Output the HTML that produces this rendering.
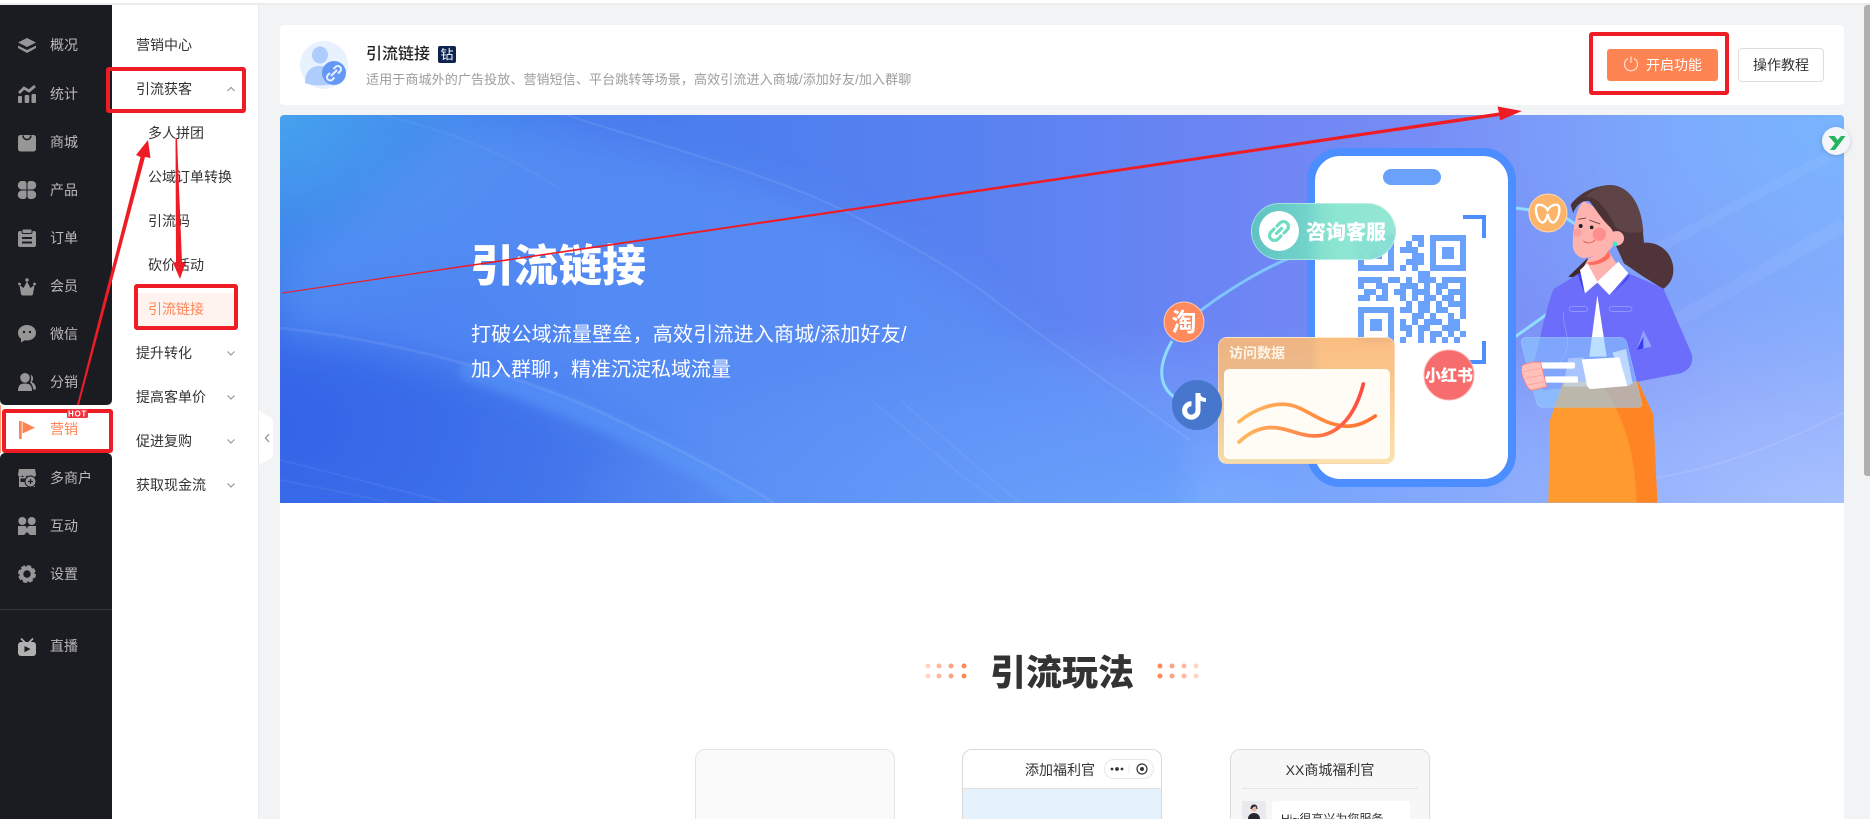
<!DOCTYPE html>
<html lang="zh-CN"><head><meta charset="utf-8"><title>引流链接</title>
<style>
html,body{margin:0;padding:0;width:1870px;height:819px;overflow:hidden;background:#f2f3f5;font-family:"Liberation Sans","Noto Sans CJK SC",sans-serif}
div,svg{position:absolute}
svg{overflow:visible}
#root{left:0;top:0;width:1870px;height:819px;overflow:hidden;background:#f2f3f5}
.t{position:absolute;white-space:nowrap;line-height:20px}
.m{left:50px;font-size:14px;color:#b9b9b9}
.s{font-size:14px;color:#333}
.i{left:18px;width:18px;height:18px;fill:#969696}
</style></head><body><div id="root">
<div style="left:0;top:0;width:1870px;height:3px;background:#fff"></div>
<div style="left:0;top:3px;width:1870px;height:2px;background:#ececec"></div>

<!-- scrollbar -->
<div style="left:1864px;top:5px;width:6px;height:471px;background:#b0b0b0;border-radius:3px 0 0 3px"></div>

<!-- dark sidebar -->
<div style="left:0;top:5px;width:112px;height:400px;background:#1b1c21;border-radius:0 0 5px 5px"></div>
<div style="left:0;top:405px;width:112px;height:48px;background:#fff"></div>
<div style="left:0;top:405px;width:1px;height:48px;background:#ff9a75"></div>
<div style="left:0;top:453px;width:112px;height:366px;background:#1b1c21;border-radius:5px 5px 0 0"></div>
<div style="left:0;top:609px;width:112px;height:1px;background:#36373b"></div>

<svg class="i" style="top:37px" viewBox="0 0 18 18"><path d="M9 1 18 5.500 9 10 0 5.500Z"/><path d="M0 8.600 9 13 18 8.600V11L9 16 0 11Z"/></svg>
<svg class="i" style="top:85px" viewBox="0 0 18 18"><rect x="0" y="11" width="4" height="7" rx="1"/><rect x="6.700" y="10" width="4.500" height="8" rx="1"/><rect x="13.500" y="9" width="4.500" height="9" rx="1"/><path d="M1 8 6 3l5 3 6-5" fill="none" stroke="#969696" stroke-width="2.800"/></svg>
<svg class="i" style="top:134px" viewBox="0 0 18 18"><rect x="0" y="1" width="18" height="16.500" rx="2.500"/><path d="M5 1.500C5.500 7 12.500 7 13 1.500" fill="none" stroke="#1b1c21" stroke-width="1.600"/></svg>
<svg class="i" style="top:181px" viewBox="0 0 18 18"><path d="M4 0h2a2.500 2.500 0 0 1 2.500 2.500V8.500H4A4 4 0 0 1 4 0Z"/><path d="M14 0h-2a2.500 2.500 0 0 0-2.500 2.500V8.500H14A4 4 0 0 0 14 0Z"/><path d="M4 18h2a2.500 2.500 0 0 0 2.500-2.500V9.500H4A4 4 0 0 0 4 18Z"/><path d="M14 18h-2a2.500 2.500 0 0 1-2.500-2.500V9.500H14A4 4 0 0 1 14 18Z"/></svg>
<svg class="i" style="top:229px" viewBox="0 0 18 18"><rect x="0" y="2" width="18" height="16" rx="2"/><rect x="4" y="0" width="10" height="4.500" rx="1.500" stroke="#1b1c21"/><rect x="4" y="8" width="10" height="2" fill="#1b1c21"/><rect x="4" y="12.500" width="10" height="2" fill="#1b1c21"/></svg>
<svg class="i" style="top:278px" viewBox="0 0 18 18"><circle cx="9" cy="2" r="1.700"/><circle cx="1.500" cy="6" r="1.400"/><circle cx="16.500" cy="6" r="1.400"/><path d="M1.500 7 5.500 10 9 3.500 12.500 10 16.500 7 15 16a2 2 0 0 1-2 1.500H5A2 2 0 0 1 3 16Z"/></svg>
<svg class="i" style="top:325px" viewBox="0 0 18 18"><path d="M9 0c5 0 9 3.300 9 7.800S14 15.500 9 15.500c-.8 0-1.500 0-2.300-.2L3 17.500v-3.700C1 12.400 0 10.300 0 7.800 0 3.300 4 0 9 0Z"/><circle cx="6" cy="7" r="1.200" fill="#1b1c21"/><circle cx="12" cy="7" r="1.200" fill="#1b1c21"/></svg>
<svg class="i" style="top:373px" viewBox="0 0 18 18"><circle cx="7" cy="4.800" r="4.800"/><path d="M0 18C0 12 2.500 10.500 7 10.500S14 12 14 18Z"/><path d="M12.500 1.500a4.500 4.500 0 0 1 1 7.500c2.800 1 4.500 3.500 4.500 7.500H15.300c-.3-3-1.300-5.500-3.300-7 1.300-1.500 1.500-5.500.5-8Z"/></svg>
<svg style="left:18px;top:421px;width:18px;height:18px" viewBox="0 0 18 18"><rect x="1" y="0" width="2.700" height="18" fill="#ff8454"/><path d="M4.500 .5 17 6.800 4.500 12.500Z" fill="#ff8454"/></svg>
<svg class="i" style="top:469px" viewBox="0 0 18 18"><path d="M1 0h16l1 5.500a2.200 2.200 0 0 1-4.500.3 2.200 2.200 0 0 1-4.500 0 2.200 2.200 0 0 1-4.500 0A2.200 2.200 0 0 1 0 5.500Z"/><path d="M1 8h16v10H1Z"/><rect x="2.500" y="9.500" width="5" height="3.500" fill="#1b1c21"/><circle cx="12.500" cy="12.500" r="5.500" stroke="#1b1c21"/><path d="M10 12.500h5M12.500 10v5" stroke="#1b1c21" stroke-width="1.200"/></svg>
<svg class="i" style="top:517px" viewBox="0 0 18 18"><circle cx="4.300" cy="4" r="4"/><circle cx="13.700" cy="4" r="4"/><path d="M0 9h6.500c1.500 0 2 1 2.500 3 .5-2 1-3 2.500-3H18v9h-6l-3-3-3 3H0Z"/></svg>
<svg class="i" style="top:565px" viewBox="0 0 18 18"><circle cx="9" cy="9" r="5.700" fill="none" stroke="#969696" stroke-width="4"/><circle cx="9" cy="9" r="8" fill="none" stroke="#969696" stroke-width="2" stroke-dasharray="4 2.280"/></svg>
<svg class="i" style="top:638px;fill:#b0b0b0" viewBox="0 0 18 18"><rect x="0" y="4" width="18" height="14" rx="3"/><path d="M3 .5 7 4.500M15 .5 11 4.500" stroke="#b0b0b0" stroke-width="1.800"/><path d="M6.500 8 12.500 11 6.500 14.200Z" fill="#1b1c21"/></svg>

<span class="t m" style="top:35px">概况</span><span class="t m" style="top:84px">统计</span><span class="t m" style="top:132px">商城</span><span class="t m" style="top:180px">产品</span><span class="t m" style="top:228px">订单</span><span class="t m" style="top:276px">会员</span><span class="t m" style="top:324px">微信</span><span class="t m" style="top:372px">分销</span>
<span class="t m" style="top:419px;color:#ff8454">营销</span>
<span class="t m" style="top:468px">多商户</span><span class="t m" style="top:516px">互动</span><span class="t m" style="top:564px">设置</span><span class="t m" style="top:636px">直播</span>

<!-- sub menu -->
<div style="left:112px;top:5px;width:147px;height:814px;background:#fff;border-right:1px solid #ececee;box-sizing:border-box"></div>
<div style="left:138px;top:293px;width:97px;height:33px;background:#fff3ef"></div>
<span class="t s" style="left:136px;top:35px">营销中心</span>
<span class="t s" style="left:136px;top:79px">引流获客</span>
<span class="t s" style="left:148px;top:123px">多人拼团</span>
<span class="t s" style="left:148px;top:167px">公域订单转换</span>
<span class="t s" style="left:148px;top:211px">引流码</span>
<span class="t s" style="left:148px;top:255px">砍价活动</span>
<span class="t s" style="left:148px;top:299px;color:#ff8454">引流链接</span>
<span class="t s" style="left:136px;top:343px">提升转化</span>
<span class="t s" style="left:136px;top:387px">提高客单价</span>
<span class="t s" style="left:136px;top:431px">促进复购</span>
<span class="t s" style="left:136px;top:475px">获取现金流</span>
<svg style="left:0;top:0;width:1870px;height:819px" viewBox="0 0 1870 819"><g fill="none" stroke="#9a9a9a" stroke-width="1.200"><path d="M227.500 91 231 87.500 234.500 91"/><path d="M227.500 351.500 231 355 234.500 351.500"/><path d="M227.500 395.500 231 399 234.500 395.500"/><path d="M227.500 439.500 231 443 234.500 439.500"/><path d="M227.500 483.500 231 487 234.500 483.500"/></g>
<path d="M259 411 273 419V457L259 465Z" fill="#fff"/><path d="M269 434 265.500 438 269 442" fill="none" stroke="#8a8f99" stroke-width="1.300"/></svg>

<!-- header card -->
<div style="left:280px;top:25px;width:1564px;height:80px;background:#fff;border-radius:4px"></div>
<svg style="left:300px;top:41px;width:48px;height:48px" viewBox="0 0 48 48"><circle cx="24" cy="24" r="24" fill="#e8f2ff"/><ellipse cx="20" cy="14" rx="8" ry="8.500" fill="#aecdfc"/><path d="M5 42C5 30 11 25 20 25c6 0 10 2 13 6v12C24 45 12 45 5 42Z" fill="#aecdfc"/><circle cx="34" cy="32" r="12" fill="#6598f5"/><path d="M31 35 37 29" stroke="#e8f0ff" stroke-width="2" fill="none"/><path d="M30 32 27.700 34.300a3.200 3.200 0 0 0 4.500 4.500L34.500 36.500M33.500 28l2.300-2.300a3.200 3.200 0 0 1 4.500 4.500L38 32.500" stroke="#e8f0ff" stroke-width="2" fill="none"/></svg>
<span class="t" style="left:366px;top:45px;font-size:16px;font-weight:500;color:#222">引流链接</span>
<div style="left:438px;top:46px;width:18px;height:17px;background:#0e2350;border-radius:2px;color:#fff;font-size:13px;line-height:17px;text-align:center">钻</div>
<span class="t" style="left:366px;top:70px;font-size:13px;letter-spacing:.12px;color:#9c9c9c">适用于商城外的广告投放、营销短信、平台跳转等场景，高效引流进入商城/添加好友/加入群聊</span>

<div style="left:1607px;top:49px;width:111px;height:32px;background:#ff8454;border-radius:3px"></div>
<svg style="left:1623px;top:56px;width:16px;height:16px" viewBox="0 0 16 16"><path d="M5 2.500a6.500 6.500 0 1 0 6 0" fill="none" stroke="#ffe4d8" stroke-width="1.100"/><path d="M8 .5V7" stroke="#ffe4d8" stroke-width="1.100"/></svg>
<span class="t" style="left:1646px;top:55px;font-size:14px;color:#fff">开启功能</span>
<div style="left:1738px;top:48px;width:86px;height:34px;box-sizing:border-box;border:1px solid #dedede;border-radius:4px;background:#fff;font-size:14px;line-height:32px;text-align:center;color:#333">操作教程</div>

<!-- white content -->
<div style="left:280px;top:503px;width:1564px;height:316px;background:#fff"></div>

<!-- banner -->
<div style="left:280px;top:115px;width:1564px;height:388px;border-radius:4px 4px 0 0;overflow:hidden;background:
radial-gradient(300px 230px at 0 0,#46a2ee 0,rgba(70,162,238,0) 100%),
radial-gradient(420px 300px at 100% 0,#78b4ff 0,rgba(120,180,255,0) 100%),
radial-gradient(560px 220px at 100% 100%,#a6c0ff 0,rgba(166,192,255,0) 100%),
radial-gradient(620px 180px at 58% 100%,#78acff 0,rgba(120,172,255,0) 100%),
radial-gradient(360px 240px at 0 80%,#3464e8 0,rgba(52,100,232,0) 100%),
linear-gradient(90deg,#3d74ea 0,#4c7eee 28%,#5a82f1 46%,#6e85f4 62%,#7d93f7 82%,#8aa6fb 100%)"></div>

<svg style="left:0;top:0;width:1870px;height:819px" viewBox="0 0 1870 819">
<defs>
<clipPath id="bc"><rect x="280" y="115" width="1564" height="388"/></clipPath>
<filter id="b18" x="-20%" y="-20%" width="140%" height="140%"><feGaussianBlur stdDeviation="18"/></filter>
<filter id="b4" x="-20%" y="-40%" width="140%" height="180%"><feGaussianBlur stdDeviation="4"/></filter>
</defs>
<g clip-path="url(#bc)">
<path d="M567 130C640 150 760 180 843 220 900 250 950 275 998 313 1060 360 1120 400 1190 425V520H774C700 460 640 425 596 420 520 380 400 350 280 338V260C350 220 420 170 440 130Z" fill="#5c96f8" fill-opacity=".55" filter="url(#b18)"/>
<path d="M470 372C540 395 620 425 700 470 735 490 760 510 780 525" fill="none" stroke="#5c9cfa" stroke-opacity=".45" stroke-width="20" stroke-linecap="round" filter="url(#b4)"/>
<g fill="none" stroke="#fff">
<path d="M567 115C640 140 760 170 843 210 900 240 950 265 998 303 1060 350 1120 390 1190 440" stroke-opacity=".09" stroke-width="2"/>
<path d="M280 328C360 336 480 360 596 410 670 445 730 475 774 503" stroke-opacity=".08" stroke-width="3"/>
<path d="M380 115C450 130 520 160 560 190" stroke-opacity=".05" stroke-width="2"/>
<path d="M280 460C340 475 400 490 450 503M280 480C320 488 360 495 390 503" stroke-opacity=".06" stroke-width="2"/>
<path d="M870 400C910 430 950 470 1000 503M900 400C940 435 980 470 1020 503" stroke-opacity=".05" stroke-width="2"/>
<path d="M1640 480C1720 470 1790 440 1844 412" stroke-opacity=".12" stroke-width="1.500"/>
<path d="M1560 300C1640 260 1760 190 1844 150" stroke-opacity=".05" stroke-width="10"/>
<path d="M1590 370C1680 320 1780 260 1844 225" stroke-opacity=".05" stroke-width="14"/>
</g>
</g>
<!-- connecting lines -->
<g fill="none" stroke="#8fdcff" stroke-width="3">
<path d="M1200 311C1225 292 1260 270 1290 258" stroke="#7fc4ff"/>
<path d="M1172 341C1158 365 1158 385 1174 397"/>
<path d="M1396 388C1420 382 1460 368 1482 360 1510 340 1540 320 1548 313"/>
<path d="M1516 208 1530 210"/>
<path d="M1566 218 1578 226"/>
</g>
<!-- phone -->
<rect x="1311" y="152" width="201" height="331" rx="29" fill="#fff" stroke="#4c8dff" stroke-width="8"/>
<rect x="1383" y="169" width="58" height="16" rx="8" fill="#6aa1fb"/>
<g transform="translate(1358 235) scale(6)" fill="#6aa1fb"><path d="M0 0h6v1h-6zM9 0h2v1h-2zM12 0h6v1h-6zM0 1h1v1h-1zM5 1h1v1h-1zM8 1h1v1h-1zM10 1h1v1h-1zM12 1h1v1h-1zM17 1h1v1h-1zM0 2h1v1h-1zM2 2h2v1h-2zM5 2h1v1h-1zM7 2h3v1h-3zM12 2h1v1h-1zM14 2h2v1h-2zM17 2h1v1h-1zM0 3h1v1h-1zM2 3h2v1h-2zM5 3h1v1h-1zM9 3h2v1h-2zM12 3h1v1h-1zM14 3h2v1h-2zM17 3h1v1h-1zM0 4h1v1h-1zM5 4h1v1h-1zM8 4h3v1h-3zM12 4h1v1h-1zM17 4h1v1h-1zM0 5h6v1h-6zM7 5h1v1h-1zM9 5h1v1h-1zM12 5h6v1h-6zM10 6h2v1h-2zM0 7h4v1h-4zM5 7h2v1h-2zM8 7h1v1h-1zM10 7h3v1h-3zM14 7h4v1h-4zM0 8h1v1h-1zM3 8h2v1h-2zM7 8h3v1h-3zM11 8h1v1h-1zM13 8h2v1h-2zM17 8h1v1h-1zM1 9h2v1h-2zM4 9h1v1h-1zM6 9h2v1h-2zM9 9h3v1h-3zM13 9h1v1h-1zM15 9h3v1h-3zM0 10h2v1h-2zM3 10h2v1h-2zM7 10h1v1h-1zM9 10h1v1h-1zM11 10h2v1h-2zM14 10h2v1h-2zM17 10h1v1h-1zM8 11h1v1h-1zM10 11h2v1h-2zM13 11h1v1h-1zM15 11h3v1h-3zM0 12h6v1h-6zM7 12h2v1h-2zM10 12h2v1h-2zM13 12h2v1h-2zM17 12h1v1h-1zM0 13h1v1h-1zM5 13h1v1h-1zM9 13h2v1h-2zM12 13h1v1h-1zM15 13h1v1h-1zM17 13h1v1h-1zM0 14h1v1h-1zM2 14h2v1h-2zM5 14h1v1h-1zM7 14h1v1h-1zM9 14h1v1h-1zM11 14h3v1h-3zM15 14h2v1h-2zM0 15h1v1h-1zM2 15h2v1h-2zM5 15h1v1h-1zM7 15h2v1h-2zM10 15h2v1h-2zM14 15h3v1h-3zM0 16h1v1h-1zM5 16h1v1h-1zM8 16h1v1h-1zM10 16h1v1h-1zM12 16h2v1h-2zM15 16h1v1h-1zM17 16h1v1h-1zM0 17h6v1h-6zM7 17h1v1h-1zM10 17h1v1h-1zM12 17h1v1h-1zM14 17h1v1h-1zM16 17h1v1h-1z"/></g>
<path d="M1463 217H1484V238M1484 341V362H1463" fill="none" stroke="#4c8dff" stroke-width="4"/>
</svg>

<!-- pill -->
<div style="left:1251px;top:203px;width:145px;height:57px;box-sizing:border-box;border:1px solid rgba(255,255,255,.4);border-radius:29px;background:linear-gradient(90deg,rgba(92,198,190,.95),rgba(130,228,205,.92) 60%,rgba(130,225,205,.85));backdrop-filter:blur(5px)"></div>
<div style="left:1259px;top:211px;width:40px;height:40px;border-radius:50%;background:#fff"></div>
<svg style="left:1267px;top:219px;width:24px;height:24px" viewBox="0 0 24 24"><g fill="none" stroke="#6fdcc2" stroke-width="3.200" stroke-linecap="round"><path d="M9.500 14.500 14.500 9.500"/><path d="M10 7 13 4a4.800 4.800 0 0 1 7 7l-3 3"/><path d="M14 17l-3 3a4.800 4.800 0 0 1-7-7l3-3"/></g></svg>
<span class="t" style="left:1306px;top:223px;font-size:20px;font-weight:900;color:#fff">咨询客服</span>

<!-- data card -->
<div style="left:1218px;top:337px;width:177px;height:127px;box-sizing:border-box;border:1px solid rgba(255,255,255,.35);border-radius:9px;background:linear-gradient(180deg,rgba(250,184,120,.92) 0,rgba(250,190,125,.9) 30%,rgba(250,225,170,.95) 100%);backdrop-filter:blur(4px)"></div>
<span class="t" style="left:1229px;top:343px;font-size:14px;font-weight:700;color:#fff5e8">访问数据</span>
<div style="left:1224px;top:369px;width:166px;height:90px;border-radius:5px;background:#fffbf5"></div>

<svg style="left:0;top:0;width:1870px;height:819px" viewBox="0 0 1870 819">
<defs>
<linearGradient id="g1" x1="0" y1="0" x2="1" y2="0"><stop offset="0" stop-color="#ffb95e"/><stop offset="1" stop-color="#ff6f2d"/></linearGradient>
<linearGradient id="g2" x1="0" y1="0" x2="1" y2="0"><stop offset="0" stop-color="#ffb85e"/><stop offset=".6" stop-color="#ff7f47"/><stop offset="1" stop-color="#fe4a3f"/></linearGradient>
<filter id="ys" x="-40%" y="-40%" width="180%" height="180%"><feDropShadow dx="0" dy="1" stdDeviation="2" flood-color="#000" flood-opacity=".18"/></filter>
</defs>
<g transform="translate(1140 130) scale(.33333)" fill="none" stroke-width="11" stroke-linecap="round">
<path d="M297 875C340 840 400 815 450 825 500 835 540 880 610 888 650 892 680 875 706 858" stroke="url(#g1)"/>
<path d="M297 936C330 905 370 885 420 895 470 905 500 925 550 915 610 900 650 840 670 762" stroke="url(#g2)"/>
</g>
<!-- logos -->
<circle cx="1184" cy="322" r="20" fill="#ff8a5e" stroke="#ffc7ae" stroke-width="1"/>
<circle cx="1197" cy="405" r="25" fill="#4777cc"/>
<g transform="translate(1184 390)"><path d="M14 3v17.500a6.700 6.700 0 1 1-6.500-6.700" fill="none" stroke="#fff" stroke-width="5"/><path d="M14 4c1 4 4 6 8 6" fill="none" stroke="#fff" stroke-width="4"/></g>
<circle cx="1449" cy="375" r="25" fill="#f76d6d" stroke="#ffb2b2" stroke-width="1"/>
<circle cx="1548" cy="213" r="19" fill="#fbb468" stroke="#ffd8ae" stroke-width="1"/>
<g transform="translate(1500 130) scale(.33333)" fill="none" stroke="#fff" stroke-width="7"><path d="M143 240C135 225 115 220 110 228 104 240 112 272 125 277 135 280 140 265 143 252 146 265 151 280 161 277 174 272 182 240 176 228 171 220 151 225 143 240Z"/></g>
<text x="1184" y="331" font-size="25" font-weight="700" fill="#fff" text-anchor="middle" font-family="'Liberation Sans','Noto Sans CJK SC',sans-serif">淘</text>
<text x="1449" y="381" font-size="16" font-weight="900" fill="#fff" text-anchor="middle" font-family="'Liberation Sans','Noto Sans CJK SC',sans-serif">小红书</text>

<!-- woman -->
<g transform="translate(1500 130) scale(.33333)">
<path d="M205 440 262 385 290 430 240 445Z" fill="#3f2b2e"/>
<path d="M212 225C235 190 285 165 335 165 395 172 425 230 432 338 480 335 520 370 520 420 520 450 505 465 490 477L430 440 372 400 340 330 320 260 270 200Z" fill="#4f3539"/>
<path d="M258 200C285 172 310 165 335 165 395 172 425 230 430 305 395 312 365 308 345 290 330 250 300 210 258 200Z" fill="#5e4347"/>
<path d="M265 385 325 362 355 410 295 462 250 412Z" fill="#ffb3ae"/>
<path d="M260 398C290 395 315 385 325 362L332 378C320 395 295 405 270 405Z" fill="#ff6b5f"/>
<circle cx="350" cy="325" r="22" fill="#ffb3ae"/>
<path d="M218 340C220 290 228 235 250 215 285 222 320 270 345 315 345 350 330 365 300 375L250 385C230 380 218 365 218 340Z" fill="#ffb3ae"/>
<path d="M212 225C235 195 280 195 300 220 320 245 335 280 350 305 320 290 295 250 270 215 250 205 225 230 220 250Z" fill="#4a3236"/>
<circle cx="298" cy="313" r="20" fill="#ff8f8c"/><circle cx="232" cy="308" r="13" fill="#ff9f9c"/>
<circle cx="242" cy="288" r="6" fill="#222"/><circle cx="275" cy="292" r="5.500" fill="#222"/>
<path d="M235 268 258 264M268 270 300 282" stroke="#5a3b3e" stroke-width="2.500" fill="none"/>
<path d="M250 333C262 342 275 340 285 330" stroke="#d8524f" stroke-width="2.500" fill="none"/>
<circle cx="345" cy="342" r="7" fill="#3ee6d5"/>
<path d="M237 430 160 478C130 560 120 640 100 700L130 780 415 755 540 730C570 722 585 695 572 665L490 475 385 430 292 460Z" fill="#6c6dfa"/>
<path d="M233 430 252 490 245 430ZM390 430 340 490 385 445Z" fill="#3f41f0"/>
<path d="M292 495 268 680H320Z" fill="#fff"/>
<path d="M240 420 262 400 292 455 355 395 385 430 328 495 292 458 255 490Z" fill="#fff"/>
<path d="M430 600 455 650 410 660Z" fill="#8fa0ff"/><path d="M430 620 410 660 430 655Z" fill="#3a3cf0"/>
<rect x="208" y="530" width="55" height="14" rx="7" fill="none" stroke="#a9aafc" stroke-width="2"/>
<rect x="328" y="530" width="68" height="14" rx="7" fill="none" stroke="#a9aafc" stroke-width="2"/>
<path d="M192 545C185 580 205 610 203 640S190 680 180 700" fill="none" stroke="#9d9efc" stroke-width="2"/>
<path d="M190 755 150 870 145 1118H472L460 855 415 755Z" fill="#ff9a2e"/>
<path d="M310 770C370 860 405 960 410 1118H472L460 855 415 755Z" fill="#ff8524"/>
<path d="M80 622H360C372 622 378 630 381 640L425 820C427 830 420 832 410 832H128C118 832 112 826 110 818L64 640C62 628 70 622 80 622Z" fill="#8ecbff" fill-opacity=".6" stroke="#a6d6ff" stroke-opacity=".6" stroke-width="2"/>
<path d="M337 668 378 657 398 760 380 770Z" fill="#bcd8ff"/>
<path d="M205 685 250 682 262 770H190Z" fill="#cfe3ff" fill-opacity=".5"/>
<path d="M245 688 358 682 382 768 275 777C265 777 262 770 260 762Z" fill="#fff"/>
<rect x="120" y="697" width="105" height="19" rx="6" fill="#fff"/><rect x="135" y="739" width="99" height="19" rx="4" fill="#fff"/>
<path d="M66 708C80 697 105 695 122 697L140 770 95 781C85 778 82 770 76 758 66 740 62 720 66 708Z" fill="#ffc0bb" stroke="#ff7f7a" stroke-width="2.500"/>
<path d="M70 725 122 715M75 745 128 735M85 765 133 755" stroke="#ff9a95" stroke-width="2" fill="none"/>
</g>
<!-- Y badge -->
<circle cx="1836" cy="141" r="14" fill="#f3f6f8" filter="url(#ys)"/>
<path d="M1828.500 136H1834.500L1837.500 140 1841 136H1845.500L1839.500 144 1835 150H1830L1835 143.500Z" fill="#27b45e"/>
</svg>

<!-- hero text -->
<span class="t" style="left:470px;top:237px;font-size:44px;line-height:60px;font-weight:900;color:#fff">引流链接</span>
<span class="t" style="left:471px;top:320px;font-size:20px;letter-spacing:.2px;line-height:30px;color:#fff">打破公域流量壁垒，高效引流进入商城/添加好友/</span>
<span class="t" style="left:471px;top:355px;font-size:20px;line-height:30px;color:#fff">加入群聊，精准沉淀私域流量</span>

<!-- play section -->
<span class="t" style="left:990px;top:648px;font-size:36px;line-height:50px;font-weight:900;color:#333">引流玩法</span>
<svg style="left:0;top:0;width:1870px;height:819px" viewBox="0 0 1870 819">
<g fill="#ffd5c4"><circle cx="928" cy="666" r="2.500"/><circle cx="928" cy="676" r="2.500"/><circle cx="1196" cy="666" r="2.500"/><circle cx="1196" cy="676" r="2.500"/></g>
<g fill="#ffb89e"><circle cx="939" cy="666" r="2.500"/><circle cx="939" cy="676" r="2.500"/><circle cx="1184" cy="666" r="2.500"/><circle cx="1184" cy="676" r="2.500"/></g>
<g fill="#ffa27f"><circle cx="951" cy="666" r="2.500"/><circle cx="951" cy="676" r="2.500"/><circle cx="1172" cy="666" r="2.500"/><circle cx="1172" cy="676" r="2.500"/></g>
<g fill="#ff8a55"><circle cx="964" cy="666" r="2.500"/><circle cx="964" cy="676" r="2.500"/><circle cx="1160" cy="666" r="2.500"/><circle cx="1160" cy="676" r="2.500"/></g>
</svg>

<div style="left:695px;top:749px;width:200px;height:90px;box-sizing:border-box;border:1px solid #e4e4e4;border-radius:10px;background:#fafafa"></div>

<div style="left:962px;top:749px;width:200px;height:90px;box-sizing:border-box;border:1px solid #d9d9d9;border-radius:10px;background:#fff;overflow:hidden">
<div style="left:0;top:38px;width:198px;height:60px;background:#e6f2fb;border-top:1px solid #e2e2e2"></div></div>
<span class="t" style="left:1025px;top:760px;font-size:14px;color:#333">添加福利官</span>
<div style="left:1104px;top:759px;width:50px;height:20px;box-sizing:border-box;border:1px solid #e8e8e8;border-radius:10px;background:#fff"></div>
<svg style="left:1104px;top:759px;width:50px;height:20px" viewBox="0 0 50 20"><circle cx="8" cy="10" r="1.400" fill="#333"/><circle cx="13" cy="10" r="1.900" fill="#333"/><circle cx="18" cy="10" r="1.400" fill="#333"/><path d="M25 5V15" stroke="#eee"/><circle cx="38" cy="10" r="5" fill="none" stroke="#333" stroke-width="1.200"/><circle cx="38" cy="10" r="2" fill="#333"/></svg>

<div style="left:1230px;top:749px;width:200px;height:90px;box-sizing:border-box;border:1px solid #dcdcdc;border-radius:10px;background:#f7f7f7"></div>
<span class="t" style="left:1230px;width:200px;text-align:center;top:760px;font-size:14px;color:#333">XX商城福利官</span>
<div style="left:1242px;top:788px;width:176px;height:1px;background:#e4e4e4"></div>
<div style="left:1242px;top:801px;width:24px;height:24px;background:#e9e9ee;border-radius:2px"></div>
<svg style="left:1242px;top:801px;width:24px;height:24px" viewBox="0 0 24 24"><circle cx="12" cy="7.500" r="3" fill="#e8b9a0"/><path d="M12 3.500c-2.500 0-3.500 2-3.500 4.500h1.500c.5-2 2-2.500 4-2.500l.5 2.500h1c0-3-1-4.500-3.500-4.500Z" fill="#2a2a30"/><path d="M6 18c0-4 3-6 6-6s6 2 6 6Z" fill="#26262c"/></svg>
<div style="left:1272px;top:801px;width:138px;height:30px;background:#fff;border-radius:3px"></div>
<span class="t" style="left:1281px;top:809px;font-size:12px;color:#333">Hi~很高兴为您服务</span>

<!-- annotations -->
<svg style="left:0;top:0;width:1870px;height:819px" viewBox="0 0 1870 819">
<g fill="none" stroke="#ee1c25" stroke-width="4"><rect x="108" y="69" width="136" height="42" rx="1"/><rect x="136" y="286" width="100" height="42" rx="1"/><rect x="4" y="411" width="107" height="40" rx="1"/><rect x="1591" y="34" width="136" height="59" rx="1"/></g>
<g fill="#ee1c25">
<path d="M77 405 140.500 157 136 155 148 140 150.500 158 145 157 79 405Z"/>
<path d="M175.500 138 176 262 173 263 180 279 185.500 263 182 262 177 138Z"/>
<path d="M282 292.500 1499 112.500 1497.500 106.500 1522 111 1500 120.500 1499.500 116 282.500 293.500Z"/>
</g>
<rect x="67" y="409" width="21" height="9" rx="1.500" fill="#f4303c"/>
<text x="77.500" y="416.700" font-size="8" font-weight="700" fill="#fff" text-anchor="middle" letter-spacing=".7" font-family="'Liberation Sans',sans-serif">HOT</text>
</svg>
</div></body></html>
